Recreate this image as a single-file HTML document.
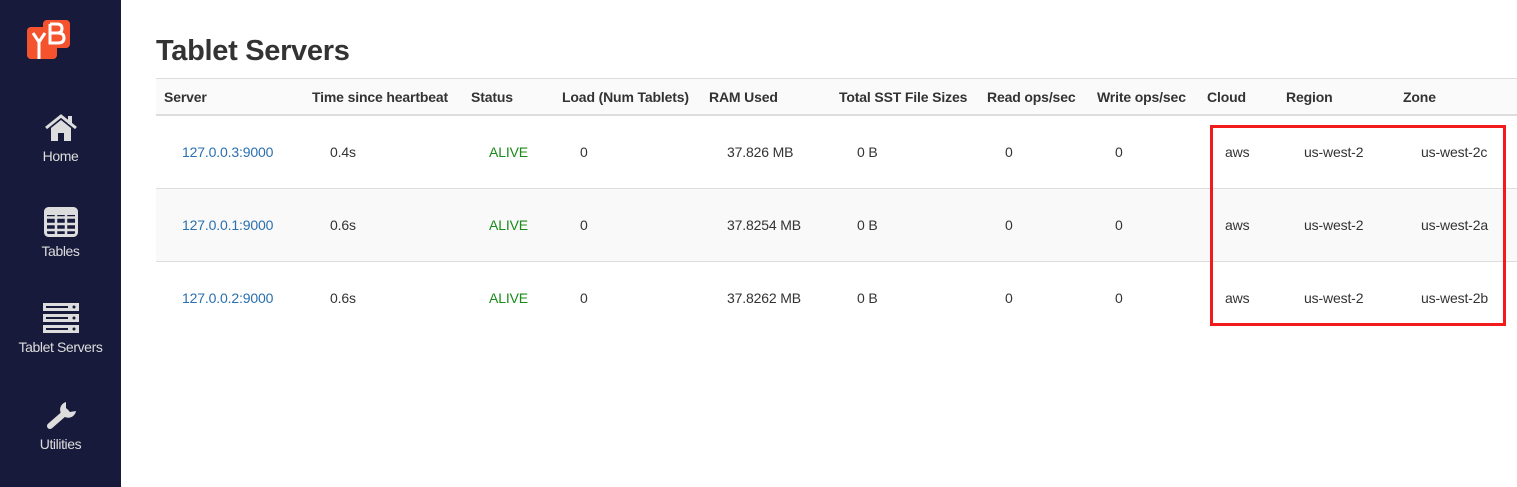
<!DOCTYPE html>
<html><head><meta charset="utf-8"><style>
*{margin:0;padding:0;box-sizing:border-box}
body{width:1517px;height:487px;overflow:hidden;background:#fff;font-family:"Liberation Sans",Arial,sans-serif;color:#333;position:relative}
.side{position:absolute;left:0;top:0;width:121px;height:487px;background:#171a3b}
.nav{position:absolute;left:0;width:121px;text-align:center;color:#ddd;font-size:14px;letter-spacing:-0.4px}
.nav svg{display:block;margin:0 auto 6px}
h1{position:absolute;left:156px;top:35px;font-size:29px;font-weight:bold;color:#333;letter-spacing:-0.3px}
.hd{position:absolute;left:156px;top:78px;width:1361px;height:38px;border-top:1px solid #ddd;border-bottom:2px solid #ddd;background:#fafafa}
.row{position:absolute;left:156px;width:1361px;height:73px;border-bottom:1px solid #ddd}
.t{position:absolute;font-size:14px;white-space:nowrap;letter-spacing:-0.15px}
.h{font-weight:bold;top:89px}
.box{position:absolute;left:1210px;top:125px;width:296px;height:201px;border:3px solid #f21b1b}
</style></head><body>
<div class="side">
<svg style="position:absolute;left:27px;top:20px" width="44" height="40" viewBox="0 0 44 40">
<rect x="0" y="7" width="30" height="32" rx="4" fill="#f4532e"/>
<rect x="16" y="0" width="27" height="28" rx="4" fill="#f4532e"/>
<path d="M6 13 L12 22 L18 13 M12 22 V39" stroke="#fff" stroke-width="3" fill="none"/>
<path d="M23 4 V23 H31 Q37 23 37 18 Q37 13 31 13 H23 M23 13 H30 Q35 13 35 8.5 Q35 4 30 4 H23" stroke="#fff" stroke-width="3" fill="none"/>
</svg>
<div class="nav" style="top:114px"><svg width="34" height="28" viewBox="0 0 34 28"><path d="M2 14 L17 2 L32 14" stroke="#ddd" stroke-width="3" fill="none"/><rect x="24" y="2" width="4" height="8" fill="#ddd"/><path d="M7 14 L17 6 L27 14 V27 H20 V19 H14 V27 H7Z" fill="#ddd"/></svg>Home</div>
<div class="nav" style="top:207px"><svg width="34" height="30" viewBox="0 0 34 30"><rect x="1.5" y="1.5" width="31" height="27" rx="3" fill="none" stroke="#ddd" stroke-width="3"/><path d="M2 10.5 H32 M2 17 H32 M2 23 H32 M12 8 V28 M22 8 V28" stroke="#ddd" stroke-width="2.5"/><rect x="2" y="2" width="30" height="6" fill="#ddd"/></svg>Tables</div>
<div class="nav" style="top:303px"><svg width="36" height="30" viewBox="0 0 36 30"><g fill="#ddd"><rect x="0" y="0" width="36" height="8"/><rect x="0" y="11" width="36" height="8"/><rect x="0" y="22" width="36" height="8"/></g><g fill="#171a3b"><rect x="3" y="3" width="22" height="2"/><rect x="3" y="14" width="22" height="2"/><rect x="3" y="25" width="22" height="2"/><circle cx="31" cy="4" r="1.5"/><circle cx="31" cy="15" r="1.5"/><circle cx="31" cy="26" r="1.5"/></g></svg>Tablet Servers</div>
<div class="nav" style="top:400px"><svg width="34" height="30" viewBox="0 0 34 30"><path d="M22 2 A8 8 0 1 0 32 11 L26 12 L22 8Z" fill="#ddd"/><path d="M22 12 L6 26" stroke="#ddd" stroke-width="6" stroke-linecap="round"/></svg>Utilities</div>
</div>
<h1>Tablet Servers</h1>
<div class="hd"></div>
<div class="row" style="top:116px"></div>
<div class="row" style="top:189px;background:#f9f9f9"></div>
<div class="row" style="top:262px;border-bottom:none"></div>
<span class="t h" style="left:164px">Server</span>
<span class="t h" style="left:312px">Time since heartbeat</span>
<span class="t h" style="left:471px">Status</span>
<span class="t h" style="left:562px">Load (Num Tablets)</span>
<span class="t h" style="left:709px">RAM Used</span>
<span class="t h" style="left:839px">Total SST File Sizes</span>
<span class="t h" style="left:987px">Read ops/sec</span>
<span class="t h" style="left:1097px">Write ops/sec</span>
<span class="t h" style="left:1207px">Cloud</span>
<span class="t h" style="left:1286px">Region</span>
<span class="t h" style="left:1403px">Zone</span>

<div style="position:absolute;top:144px;left:0;width:1517px">
<span class="t" style="left:182px;color:#2a6fb0">127.0.0.3:9000</span><span class="t" style="left:330px">0.4s</span><span class="t" style="left:489px;color:#1a8a1a">ALIVE</span><span class="t" style="left:580px">0</span><span class="t" style="left:727px">37.826 MB</span><span class="t" style="left:857px">0 B</span><span class="t" style="left:1005px">0</span><span class="t" style="left:1115px">0</span><span class="t" style="left:1225px">aws</span><span class="t" style="left:1304px">us-west-2</span><span class="t" style="left:1421px">us-west-2c</span>
</div>
<div style="position:absolute;top:217px;left:0;width:1517px">
<span class="t" style="left:182px;color:#2a6fb0">127.0.0.1:9000</span><span class="t" style="left:330px">0.6s</span><span class="t" style="left:489px;color:#1a8a1a">ALIVE</span><span class="t" style="left:580px">0</span><span class="t" style="left:727px">37.8254 MB</span><span class="t" style="left:857px">0 B</span><span class="t" style="left:1005px">0</span><span class="t" style="left:1115px">0</span><span class="t" style="left:1225px">aws</span><span class="t" style="left:1304px">us-west-2</span><span class="t" style="left:1421px">us-west-2a</span>
</div>
<div style="position:absolute;top:290px;left:0;width:1517px">
<span class="t" style="left:182px;color:#2a6fb0">127.0.0.2:9000</span><span class="t" style="left:330px">0.6s</span><span class="t" style="left:489px;color:#1a8a1a">ALIVE</span><span class="t" style="left:580px">0</span><span class="t" style="left:727px">37.8262 MB</span><span class="t" style="left:857px">0 B</span><span class="t" style="left:1005px">0</span><span class="t" style="left:1115px">0</span><span class="t" style="left:1225px">aws</span><span class="t" style="left:1304px">us-west-2</span><span class="t" style="left:1421px">us-west-2b</span>
</div>
<div class="box"></div>
</body></html>
